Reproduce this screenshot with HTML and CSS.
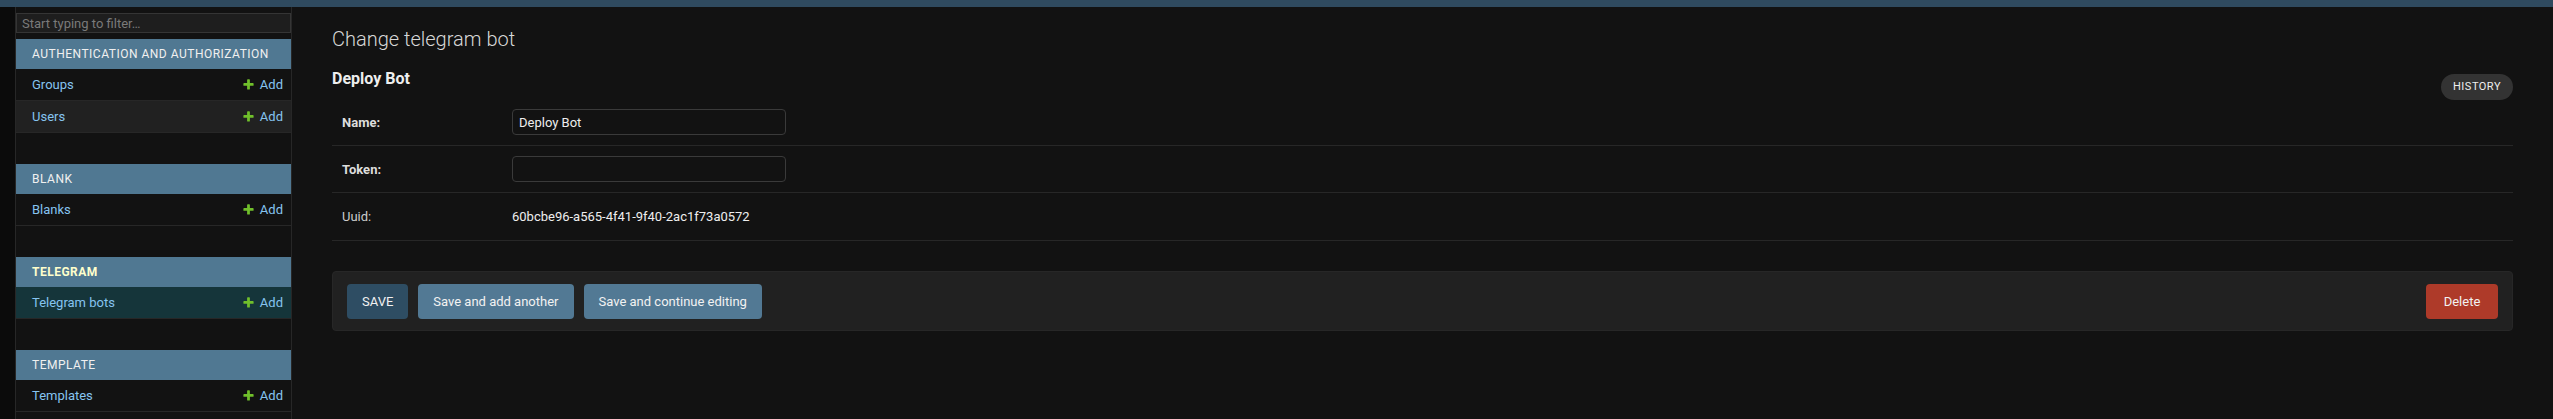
FILE: index.html
```html
<!DOCTYPE html>
<html lang="en">
<head>
<meta charset="utf-8">
<title>Change telegram bot</title>
<link rel="stylesheet" href="styles.css">
</head>
<body>
<div class="header-bar"></div>
<div class="main">
  <div class="toggle"></div>
  <nav class="sidebar">
    <input class="nav-filter" type="search" placeholder="Start typing to filter…">
    <div class="app">
      <div class="app-caption">Authentication and Authorization</div>
      <div class="model-row"><a class="model-link">Groups</a><a class="addlink"><svg class="plus" viewBox="0 0 1792 1792"><path d="M1600 796v192q0 40-28 68t-68 28h-416v416q0 40-28 68t-68 28h-192q-40 0-68-28t-28-68v-416h-416q-40 0-68-28t-28-68v-192q0-40 28-68t68-28h416v-416q0-40 28-68t68-28h192q40 0 68 28t28 68v416h416q40 0 68 28t28 68z"/></svg>Add</a></div>
      <div class="model-row alt"><a class="model-link">Users</a><a class="addlink"><svg class="plus" viewBox="0 0 1792 1792"><path d="M1600 796v192q0 40-28 68t-68 28h-416v416q0 40-28 68t-68 28h-192q-40 0-68-28t-28-68v-416h-416q-40 0-68-28t-28-68v-192q0-40 28-68t68-28h416v-416q0-40 28-68t68-28h192q40 0 68 28t28 68v416h416q40 0 68 28t28 68z"/></svg>Add</a></div>
    </div>
    <div class="app">
      <div class="app-caption">Blank</div>
      <div class="model-row"><a class="model-link">Blanks</a><a class="addlink"><svg class="plus" viewBox="0 0 1792 1792"><path d="M1600 796v192q0 40-28 68t-68 28h-416v416q0 40-28 68t-68 28h-192q-40 0-68-28t-28-68v-416h-416q-40 0-68-28t-28-68v-192q0-40 28-68t68-28h416v-416q0-40 28-68t68-28h192q40 0 68 28t28 68v416h416q40 0 68 28t28 68z"/></svg>Add</a></div>
    </div>
    <div class="app current">
      <div class="app-caption">Telegram</div>
      <div class="model-row selected"><a class="model-link">Telegram bots</a><a class="addlink"><svg class="plus" viewBox="0 0 1792 1792"><path d="M1600 796v192q0 40-28 68t-68 28h-416v416q0 40-28 68t-68 28h-192q-40 0-68-28t-28-68v-416h-416q-40 0-68-28t-28-68v-192q0-40 28-68t68-28h416v-416q0-40 28-68t68-28h192q40 0 68 28t28 68v416h416q40 0 68 28t28 68z"/></svg>Add</a></div>
    </div>
    <div class="app">
      <div class="app-caption">Template</div>
      <div class="model-row"><a class="model-link">Templates</a><a class="addlink"><svg class="plus" viewBox="0 0 1792 1792"><path d="M1600 796v192q0 40-28 68t-68 28h-416v416q0 40-28 68t-68 28h-192q-40 0-68-28t-28-68v-416h-416q-40 0-68-28t-28-68v-192q0-40 28-68t68-28h416v-416q0-40 28-68t68-28h192q40 0 68 28t28 68v416h416q40 0 68 28t28 68z"/></svg>Add</a></div>
    </div>
  </nav>
  <div class="content">
    <h1 class="page-title">Change telegram bot</h1>
    <div class="subhead">
      <h2 class="object-name">Deploy Bot</h2>
      <a class="history">History</a>
    </div>
    <form class="change-form">
      <div class="fields">
        <div class="form-row">
          <label class="req">Name:</label>
          <input class="text-input" type="text" value="Deploy Bot">
        </div>
        <div class="form-row">
          <label class="req">Token:</label>
          <input class="text-input" type="text" value="">
        </div>
        <div class="form-row">
          <label class="opt">Uuid:</label>
          <div class="readonly">60bcbe96-a565-4f41-9f40-2ac1f73a0572</div>
        </div>
      </div>
      <div class="submit-row">
        <button class="btn btn-default" type="button">SAVE</button>
        <button class="btn" type="button">Save and add another</button>
        <button class="btn" type="button">Save and continue editing</button>
        <a class="btn delete">Delete</a>
      </div>
    </form>
  </div>
</div>
</body>
</html>
```
FILE: styles.css
```css
* { box-sizing: border-box; }
html, body { margin: 0; background: #121212; }
body {
  font-family: Roboto, "Liberation Sans", sans-serif;
  font-size: 13px;
  color: #eeeeee;
}
.header-bar { height: 7px; background: #2f4a5f; }
.main { display: flex; height: 412px; overflow: hidden; }
.toggle { flex: 0 0 16px; background: #0b0b0b; border-right: 1px solid #272727; }
.sidebar { flex: 0 0 276px; border-right: 1px solid #272727; }
.nav-filter {
  display: block; width: 100%; height: 20px; margin: 6px 0;
  padding: 2px 5px; border: 1px solid #353535; background: #1e1e1e;
  color: #eee; font: 13px Roboto, sans-serif; outline: none;
}
.nav-filter::placeholder { color: #7a7a7a; }
.app { margin-bottom: 31px; }
.app-caption {
  background: #507892; color: #f0f0f0; padding: 8px 16px; white-space: nowrap;
  font-size: 12px; line-height: 14px; letter-spacing: .5px; text-transform: uppercase;
}
.current .app-caption { color: #ffffcc; font-weight: 700; }
.model-row {
  display: flex; justify-content: space-between; align-items: center;
  padding: 8px 8px 8px 16px; line-height: 15px; border-bottom: 1px solid #272727;
}
.model-row.alt { background: #212121; }
.model-row.selected { background: #15353a; }
.model-link, .addlink { color: #86c4f0; }
.addlink { display: flex; align-items: center; gap: 5px; }
.plus { width: 13px; height: 13px; fill: #70bf2b; }
.content { flex: 1; padding: 20px 40px; }
.page-title { margin: 0 0 18px; font-size: 20px; font-weight: 300; line-height: 24px; color: #d8d8d8; }
.subhead { display: flex; justify-content: space-between; align-items: flex-start; height: 30px; }
.object-name { margin: 0; font-size: 16px; line-height: 20px; font-weight: 700; color: #eeeeee; }
.history {
  margin-top: 5px; height: 26px; padding: 0 12px; line-height: 26px; border-radius: 15px;
  background: #333333; color: #eeeeee; font-size: 11px; letter-spacing: .5px; text-transform: uppercase;
}
.fields { margin-bottom: 30px; }
.form-row { display: flex; align-items: baseline; padding: 10px; border-bottom: 1px solid #272727; }
.form-row label { flex: 0 0 170px; padding-right: 10px; color: #dddddd; }
.form-row label.req { font-weight: 700; }
.form-row label.opt { color: #cccccc; }
.text-input {
  width: 274px; height: 26px; padding: 5px 6px; border: 1px solid #3a3a3a; border-radius: 4px;
  background: #121212; color: #eeeeee; font: 13px Roboto, sans-serif;
}
.readonly { padding: 6px 0; line-height: 15px; }
.submit-row {
  display: flex; gap: 10px; padding: 12px 14px 11px; background: #212121;
  border: 1px solid #272727; border-radius: 4px;
}
.btn {
  display: block; height: 35px; padding: 10px 15px; line-height: 15px; border: 0; border-radius: 4px;
  background: #527994; color: #f2f2f2; font: 13px Roboto, sans-serif;
}
.btn-default { background: #2e4d63; }
.delete { margin-left: auto; background: #ae3a29; min-width: 72px; text-align: center; }
```
